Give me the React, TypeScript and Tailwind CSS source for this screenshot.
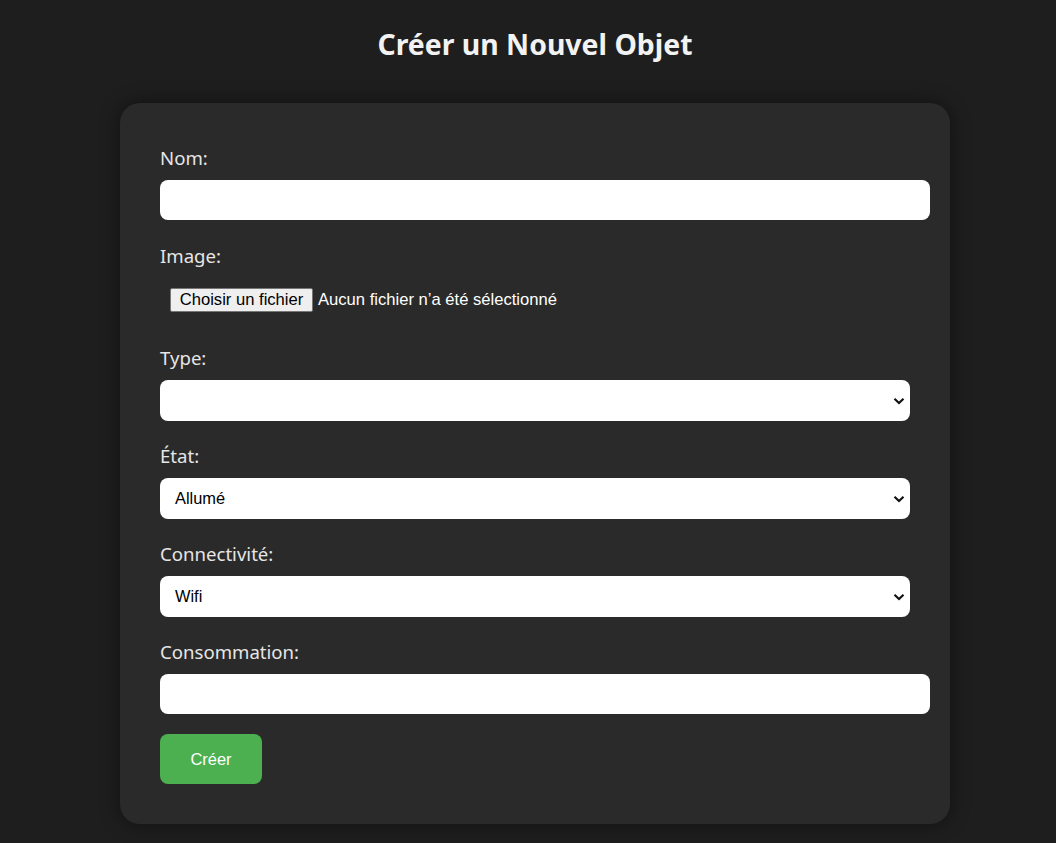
import React from "react";

const Chevron = () => (
  <svg width="12" height="8" viewBox="0 0 12 8" className="shrink-0">
    <path d="M1.5 1.8 L6 6 L10.5 1.8" fill="none" stroke="#111" strokeWidth="2.2" strokeLinecap="butt" />
  </svg>
);

const Label = ({ children }: { children: React.ReactNode }) => (
  <div className="text-[18.6px] leading-[24px] text-[#e6e6e6] mb-[10px]">{children}</div>
);

const FakeSelect = ({ value }: { value: string }) => (
  <div className="w-[750px] h-[41px] bg-white rounded-[8px] flex items-center justify-between pl-[15px] pr-[5px] text-[16.4px] text-black font-['Liberation_Sans',Arial,sans-serif]">
    <span>{value}</span>
    <Chevron />
  </div>
);

export default function App() {
  return (
    <div className="min-h-[843px] w-full bg-[#1e1e1e] font-['Noto_Sans',sans-serif] flex flex-col items-center pl-[14px]">
      <h1 className="mt-[25px] text-[28.4px] leading-[38px] font-bold text-[#f2f2f2]">Créer un Nouvel Objet</h1>
      <div className="mt-[40px] w-[830px] bg-[#2a2a2a] rounded-[20px] shadow-[0_0_20px_rgba(0,0,0,0.45)] px-[40px] pt-[43px] pb-[40px] flex flex-col">
        <Label>Nom:</Label>
        <div className="w-[770px] h-[40px] bg-white rounded-[8px] mb-[24px]" />
        <Label>Image:</Label>
        <div className="h-[44px] p-[10px] flex items-center mb-[24px] font-['Liberation_Sans',Arial,sans-serif] text-[16.6px]">
          <span className="w-[143px] h-[24px] flex items-center justify-center bg-[#efefef] border border-[#767676] rounded-[2px] text-black">Choisir un fichier</span>
          <span className="ml-[5px] text-white">Aucun fichier n’a été sélectionné</span>
        </div>
        <Label>Type:</Label>
        <div className="mb-[23px]"><FakeSelect value="" /></div>
        <Label>État:</Label>
        <div className="mb-[23px]"><FakeSelect value="Allumé" /></div>
        <Label>Connectivité:</Label>
        <div className="mb-[23px]"><FakeSelect value="Wifi" /></div>
        <Label>Consommation:</Label>
        <div className="w-[770px] h-[40px] bg-white rounded-[8px] mb-[20px]" />
        <div>
          <button className="w-[102px] h-[50px] bg-[#4caf50] rounded-[8px] text-white text-[16.4px] font-['Liberation_Sans',Arial,sans-serif]">Créer</button>
        </div>
      </div>
    </div>
  );
}
